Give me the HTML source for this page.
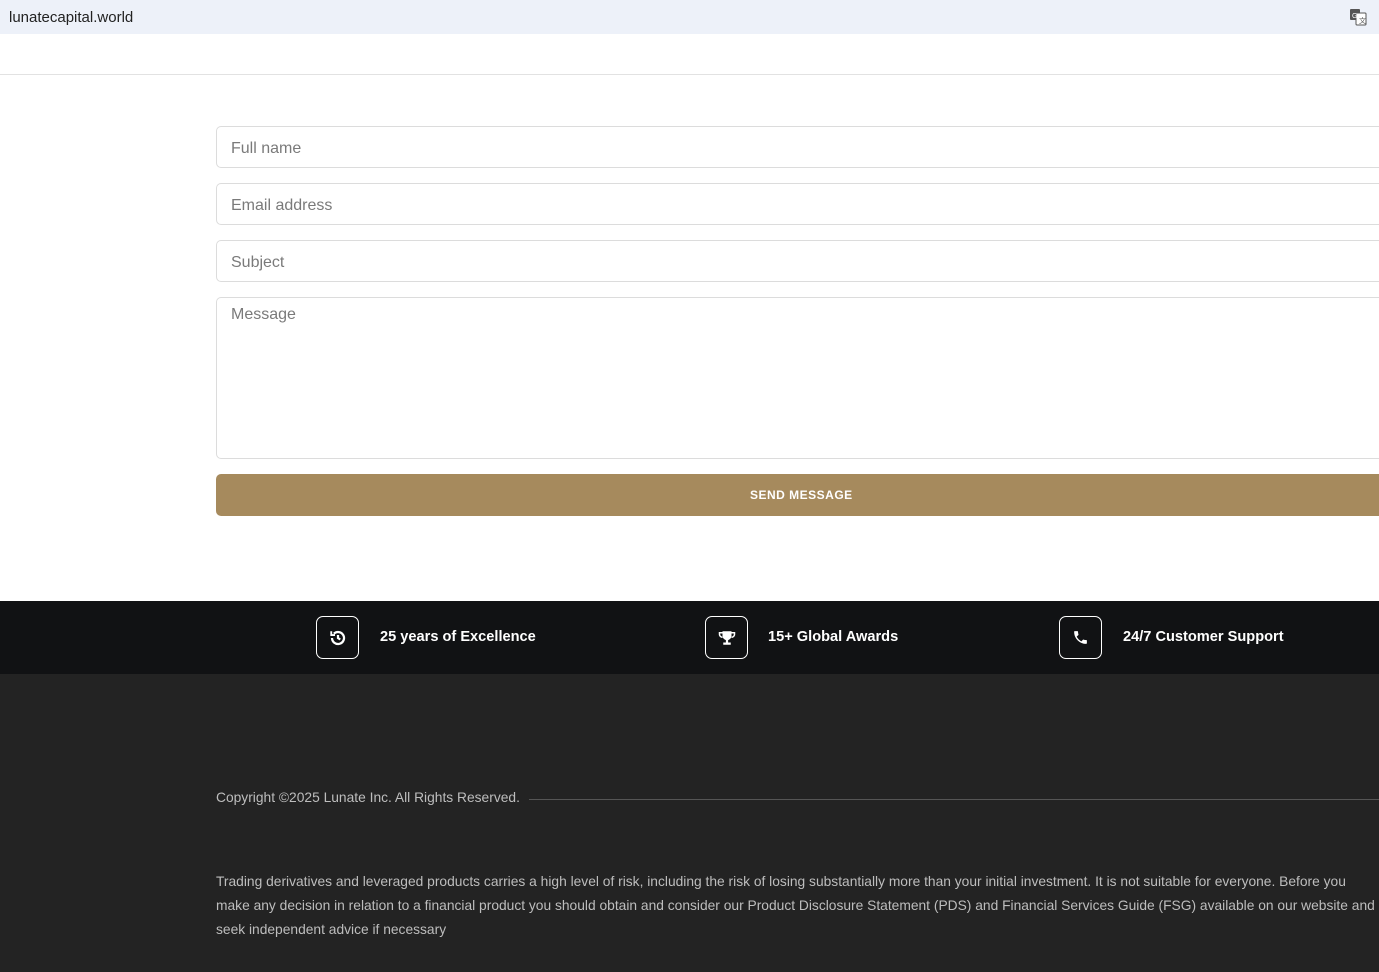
<!DOCTYPE html>
<html><head><meta charset="utf-8"><style>
*{box-sizing:border-box;margin:0;padding:0}
body{width:1379px;height:972px;overflow:hidden;font-family:"Liberation Sans",sans-serif;background:#fff;position:relative}
.top{position:absolute;left:0;top:0;width:1379px;height:34px;background:#edf1f9;font-size:15px;color:#222;padding:9px 9px}
.hr{position:absolute;left:0;top:74px;width:1379px;height:1px;background:#e2e2e2}
.in{position:absolute;left:216px;width:1170px;border:1px solid #dcdcdc;border-radius:5px;font-size:16px;color:#7a7a7a;padding:0 14px}
.btn{position:absolute;left:216px;top:474px;width:1170px;height:42px;background:#a68a5d;border-radius:5px;color:#fff;font-size:12px;font-weight:bold;letter-spacing:.5px;line-height:42px}
.band{position:absolute;left:0;top:601px;width:1379px;height:73px;background:#111214}
.ic{position:absolute;top:15px;width:43px;height:43px;border:1px solid #fff;border-radius:7px;display:flex;align-items:center;justify-content:center}
.lb{position:absolute;top:28px;color:#fff;font-weight:bold;font-size:14.6px}
.foot{position:absolute;left:0;top:674px;width:1379px;height:298px;background:#232323;color:#bdbdbd}
</style></head><body>
<div class="top">lunatecapital.world
<svg style="position:absolute;right:12px;top:8px" width="18" height="18" viewBox="0 0 18 18"><rect x="1" y="1" width="10" height="11" rx="1" fill="#555"/><rect x="7" y="5" width="10" height="12" rx="1" fill="#fff" stroke="#555"/><text x="3" y="10" font-size="7" fill="#fff">G</text><text x="10" y="15" font-size="7" fill="#555">文</text></svg></div>
<div class="hr"></div>
<div class="in" style="top:126px;height:42px;line-height:43px">Full name</div>
<div class="in" style="top:183px;height:42px;line-height:43px">Email address</div>
<div class="in" style="top:240px;height:42px;line-height:43px">Subject</div>
<div class="in" style="top:297px;height:162px;padding-top:8px">Message</div>
<div class="btn"><span style="position:absolute;left:534px">SEND MESSAGE</span></div>
<div class="band">
<div class="ic" style="left:316px"><svg width="18" height="18" viewBox="0 0 24 24" fill="none" stroke="#fff" stroke-width="3"><path d="M4 12a8 8 0 1 0 2.5-5.8"/><path d="M3 3v5h5" stroke-width="2.5"/><path d="M12 8v4l3 2"/></svg></div>
<div class="lb" style="left:380px">25 years of Excellence</div>
<div class="ic" style="left:705px"><svg width="18" height="18" viewBox="0 0 24 24" fill="#fff"><path d="M6 3h12v6a6 6 0 0 1-12 0z"/><path d="M6 5H2v2a4 4 0 0 0 4 4M18 5h4v2a4 4 0 0 1-4 4" fill="none" stroke="#fff" stroke-width="2"/><rect x="10.5" y="14" width="3" height="4"/><rect x="7" y="18" width="10" height="3"/></svg></div>
<div class="lb" style="left:768px">15+ Global Awards</div>
<div class="ic" style="left:1059px"><svg width="17" height="17" viewBox="0 0 24 24" fill="#fff"><path d="M6.6 10.8a15 15 0 0 0 6.6 6.6l2.2-2.2a1 1 0 0 1 1-.25 11 11 0 0 0 3.6.6 1 1 0 0 1 1 1V20a1 1 0 0 1-1 1A17 17 0 0 1 3 4a1 1 0 0 1 1-1h3.5a1 1 0 0 1 1 1c0 1.25.2 2.45.6 3.6a1 1 0 0 1-.25 1z"/></svg></div>
<div class="lb" style="left:1123px">24/7 Customer Support</div>
</div>
<div class="foot">
<div style="position:absolute;left:216px;top:116px;font-size:13.8px">Copyright ©2025 Lunate Inc. All Rights Reserved.</div>
<div style="position:absolute;left:529px;top:125px;width:850px;height:1px;background:#555"></div>
<div style="position:absolute;left:216px;top:196px;width:1160px;font-size:13.8px;line-height:24px">Trading derivatives and leveraged products carries a high level of risk, including the risk of losing substantially more than your initial investment. It is not suitable for everyone. Before you make any decision in relation to a financial product you should obtain and consider our Product Disclosure Statement (PDS) and Financial Services Guide (FSG) available on our website and seek independent advice if necessary</div>
</div>
</body></html>
